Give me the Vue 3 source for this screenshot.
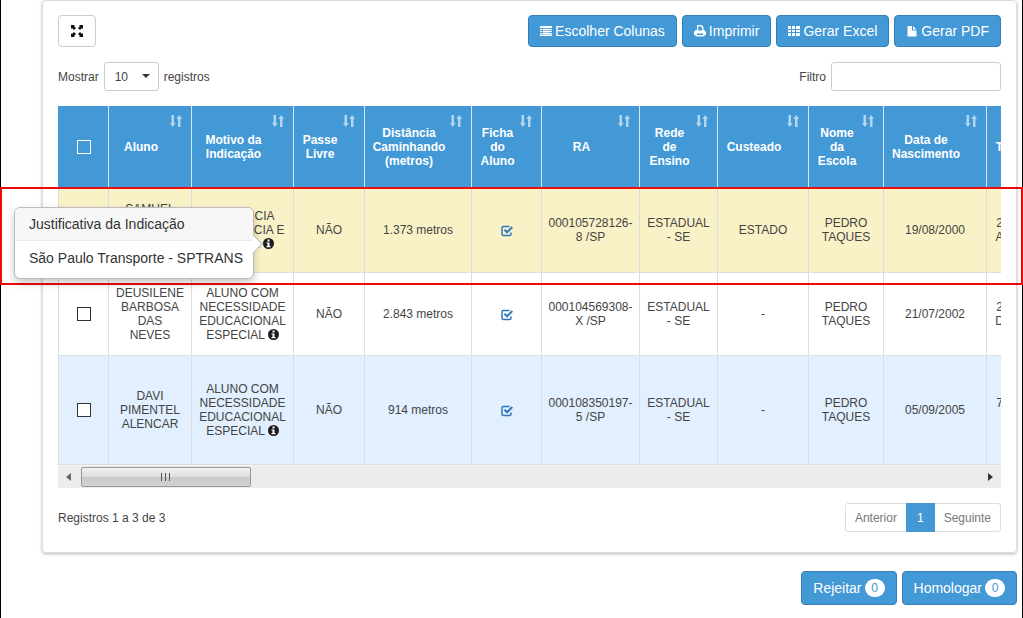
<script setup>
import { ref } from 'vue'

const pageSize = ref('10')
const filter = ref('')

const columns = [
  { label: 'Aluno', width: 83 },
  { label: 'Motivo da\nIndicação', width: 102 },
  { label: 'Passe\nLivre', width: 71 },
  { label: 'Distância\nCaminhando\n(metros)', width: 107 },
  { label: 'Ficha\ndo\nAluno', width: 70 },
  { label: 'RA', width: 98 },
  { label: 'Rede\nde\nEnsino', width: 78 },
  { label: 'Custeado', width: 91 },
  { label: 'Nome\nda\nEscola', width: 75 },
  { label: 'Data de\nNascimento', width: 103 },
  { label: 'T', width: 26, last: true }
]
const tableWidth = columns.reduce((sum, c) => sum + c.width, 50)

const special = 'ALUNO COM\nNECESSIDADE\nEDUCACIONAL\nESPECIAL'
const rows = [
  {
    kind: 'marked', name: 'SAMUEL\n\u00a0\n\u00a0\n\u00a0', reason: 'DISTÂNCIA\nRESIDÊNCIA E\nESCOLA', pass: 'NÃO',
    distance: '1.373 metros', ra: '000105728126-\n8 /SP', network: 'ESTADUAL\n- SE', paid: 'ESTADO',
    school: 'PEDRO\nTAQUES', birth: '19/08/2000', extra: '2\nA'
  },
  {
    kind: 'plain', name: 'DEUSILENE\nBARBOSA\nDAS\nNEVES', reason: special, pass: 'NÃO',
    distance: '2.843 metros', ra: '000104569308-\nX /SP', network: 'ESTADUAL\n- SE', paid: '-',
    school: 'PEDRO\nTAQUES', birth: '21/07/2002', extra: '2\nD'
  },
  {
    kind: 'tinted', name: 'DAVI\nPIMENTEL\nALENCAR', reason: special, pass: 'NÃO',
    distance: '914 metros', ra: '000108350197-\n5 /SP', network: 'ESTADUAL\n- SE', paid: '-',
    school: 'PEDRO\nTAQUES', birth: '05/09/2005', extra: '7\n\u00a0'
  }
]
</script>

<template>
  <div class="page">
    <main class="card">
      <div class="toolbar">
        <button class="expand" type="button" aria-label="Expandir">
          <svg width="12" height="12" viewBox="0 0 12 12" fill="#111">
            <path d="M0 0h4L3 1l2 2-2 2-2-2-1 1zM12 0v4l-1-1-2 2-2-2 2-2-1-1zM0 12V8l1 1 2-2 2 2-2 2 1 1zM12 12H8l1-1-2-2 2-2 2 2 1-1z" />
          </svg>
        </button>
        <div class="actions">
          <button class="btn" type="button">
            <svg width="12" height="12" viewBox="0 0 12 12" fill="#fff">
              <path d="M0 1h12v2H0zM0 4h2v1H0zM3 4h9v1H3zM0 6h2v1H0zM3 6h9v1H3zM0 8h2v1H0zM3 8h9v1H3zM0 9.500h12v1.500H0z" />
              <path d="M2.500 3.500h7v6h-7z" fill-opacity="0.45" />
            </svg>
            <span>Escolher Colunas</span>
          </button>
          <button class="btn" type="button">
            <svg width="12" height="12" viewBox="0 0 12 12" fill="#fff">
              <path fill-rule="evenodd" d="M3 0h4.500l2 2v3h1L12 7v3h-1.500v1.500h-9V10H0V7l1.500-2H3zM4.200 1.200V5.500h4V2.500H7V1.200zM3 8.500v1.500h6V8.500z" />
            </svg>
            <span>Imprimir</span>
          </button>
          <button class="btn" type="button">
            <svg width="12" height="12" viewBox="0 0 12 12" fill="#fff">
              <path d="M0 1h3v3H0zM4 1h3v3H4zM8 1h4v3H8zM0 5h3v2H0zM4 5h3v2H4zM8 5h4v2H8zM0 8h3v3H0zM4 8h3v3H4zM8 8h4v3H8z" />
            </svg>
            <span>Gerar Excel</span>
          </button>
          <button class="btn" type="button">
            <svg width="12" height="12" viewBox="0 0 12 12" fill="#fff">
              <path d="M1.500 1h4.500v4.500h4.500V11.500h-9zM7 1l3.500 3.500H7z" />
            </svg>
            <span>Gerar PDF</span>
          </button>
        </div>
      </div>

      <div class="filters">
        <label class="length">
          Mostrar
          <span class="select-box">
            <select v-model="pageSize"><option>10</option></select>
            <svg class="caret" width="8" height="4" viewBox="0 0 8 4" fill="#333"><path d="M0 0h8L4 4z" /></svg>
          </span>
          registros
        </label>
        <label class="search">Filtro <input v-model="filter" type="text" /></label>
      </div>

      <div class="scroller">
        <table :style="{ width: tableWidth + 'px' }">
          <colgroup>
            <col class="check-col" />
            <col v-for="c in columns" :key="c.label" :style="{ width: c.width + 'px' }" />
          </colgroup>
          <thead>
            <tr>
              <th><input type="checkbox" aria-label="Selecionar todos" /></th>
              <th v-for="c in columns" :key="c.label" :class="{ sortable: !c.last }">
                {{ c.label }}
                <svg v-if="!c.last" class="sort" width="12" height="12" viewBox="0 0 12 12" fill="#fff">
                  <path d="M1.500 0H4v8h1.700L2.800 12 0 8h1.500zM8 12h2.500V4H12L9.200 0 6.300 4H8z" />
                </svg>
              </th>
            </tr>
          </thead>
          <tbody>
            <tr v-for="r in rows" :key="r.ra" :class="r.kind">
              <td><input type="checkbox" aria-label="Selecionar aluno" /></td>
              <td>{{ r.name }}</td>
              <td>{{ r.reason }} <button class="info" type="button" aria-label="Justificativa"><svg width="11" height="11" viewBox="0 0 11 11">
                <circle cx="5.500" cy="5.500" r="5.500" fill="#1c1c1c" />
                <path d="M4.500 1.500h2v2h-2zM3.500 4.500h3v3.500h1v1.200h-4V8h1V5.600h-1z" fill="#fff" />
              </svg></button></td>
              <td>{{ r.pass }}</td>
              <td>{{ r.distance }}</td>
              <td>
                <a class="sheet" href="#" aria-label="Ficha do aluno">
                  <svg width="12" height="12" viewBox="0 0 12 12" fill="none" stroke="#3178b9">
                    <path d="M8.500 1.500H2.500a1.500 1.500 0 0 0-1.500 1.500v6a1.500 1.500 0 0 0 1.500 1.500h6a1.500 1.500 0 0 0 1.500-1.500V7.500" stroke-width="1.500" />
                    <path d="M3.500 4.800l2.500 2.500L11.300 2" stroke-width="2" />
                  </svg>
                </a>
              </td>
              <td>{{ r.ra }}</td>
              <td>{{ r.network }}</td>
              <td>{{ r.paid }}</td>
              <td>{{ r.school }}</td>
              <td>{{ r.birth }}</td>
              <td>{{ r.extra }}</td>
            </tr>
          </tbody>
        </table>
      </div>
      <div class="scrollbar">
        <svg width="5" height="8" viewBox="0 0 5 8" fill="#666"><path d="M5 0v8L0 4z" /></svg>
        <div class="track"><div class="thumb"><i></i><i></i><i></i></div></div>
        <svg width="5" height="8" viewBox="0 0 5 8" fill="#333"><path d="M0 0v8l5-4z" /></svg>
      </div>

      <div class="summary">
        <span>Registros 1 a 3 de 3</span>
        <nav class="pager">
          <a href="#">Anterior</a>
          <a href="#" class="current">1</a>
          <a href="#">Seguinte</a>
        </nav>
      </div>
    </main>

    <div class="footer">
      <button class="btn tall" type="button">Rejeitar <span class="badge">0</span></button>
      <button class="btn tall" type="button">Homologar <span class="badge">0</span></button>
    </div>

    <div class="highlight"></div>
    <div class="popover" role="tooltip">
      <h3>Justificativa da Indicação</h3>
      <p>São Paulo Transporte - SPTRANS</p>
    </div>
  </div>
</template>

<style>
body {
  margin: 0;
  background: #fff;
}
</style>

<style scoped>
* {
  box-sizing: border-box;
}
.page {
  position: relative;
  min-height: 100vh;
  padding: 0 5px 13px 41px;
  border: solid #000;
  border-width: 0 1px;
  font: 12px/14px "Liberation Sans", Arial, sans-serif;
  color: #444;
}
button, input, select {
  font: inherit;
  color: inherit;
}
.card {
  padding: 14px 15px 20px;
  border: 1px solid #ddd;
  border-radius: 4px;
  box-shadow: 0 1px 3px rgba(0, 0, 0, 0.3);
}
.toolbar, .filters, .summary {
  display: flex;
  justify-content: space-between;
  align-items: center;
}
.expand {
  display: flex;
  align-items: center;
  justify-content: center;
  width: 38px;
  height: 32px;
  padding: 0;
  background: #fff;
  border: 1px solid #ccc;
  border-radius: 4px;
}
.actions {
  display: flex;
  gap: 5px;
}
.btn {
  display: flex;
  align-items: center;
  gap: 3px;
  height: 32px;
  padding: 0 11px;
  background: #4398d6;
  border: 1px solid #357fb8;
  border-radius: 4px;
  color: #fff;
  font-size: 14px;
  white-space: nowrap;
}
.filters {
  margin: 15px 0;
}
.length, .search {
  display: flex;
  align-items: center;
  gap: 5px;
}
.select-box {
  position: relative;
  display: flex;
}
select {
  appearance: none;
  width: 55px;
  height: 29px;
  padding: 0 10px;
  background: #fff;
  border: 1px solid #ccc;
  border-radius: 3px;
}
.caret {
  position: absolute;
  top: 12px;
  right: 9px;
  pointer-events: none;
}
.search input {
  width: 170px;
  height: 29px;
  padding: 0 8px;
  background: #fff;
  border: 1px solid #ccc;
  border-radius: 3px;
}
.scroller {
  overflow: hidden;
}
table {
  table-layout: fixed;
  border-collapse: separate;
  border-spacing: 0;
}
.check-col {
  width: 50px;
}
th, td {
  padding: 0;
  text-align: center;
  vertical-align: middle;
  white-space: pre-line;
}
th {
  position: relative;
  height: 82px;
  background: #4398d6;
  border-left: 1px solid #d5e8f6;
  color: #fff;
}
th:first-child {
  border-left-color: #4398d6;
}
.sortable {
  padding-right: 18px;
}
.sort {
  position: absolute;
  top: 9px;
  right: 9px;
  opacity: 0.6;
}
td {
  border: solid #ddd;
  border-width: 0 0 1px 1px;
}
.marked td {
  height: 85px;
  background: #faf2c7;
}
.plain td {
  height: 83px;
}
.tinted td {
  height: 109px;
  background: #e1effe;
}
input[type="checkbox"] {
  appearance: none;
  display: block;
  width: 14px;
  height: 14px;
  margin: 0 auto;
  background: #fff;
  border: 1px solid #333;
}
th input[type="checkbox"] {
  background: transparent;
  border-color: #fff;
}
.info {
  padding: 0;
  border: 0;
  background: none;
  line-height: 11px;
  vertical-align: -1px;
}
.info svg, .sheet svg {
  display: block;
}
.sheet {
  display: inline-block;
  vertical-align: middle;
}
.scrollbar {
  display: flex;
  align-items: center;
  gap: 10px;
  height: 23px;
  padding: 0 8px;
  background: #ececec;
  border-top: 1px solid #f4f4f4;
}
.track {
  flex: 1;
}
.thumb {
  display: flex;
  align-items: center;
  justify-content: center;
  gap: 2px;
  width: 19%;
  height: 20px;
  background: linear-gradient(#f2f2f2, #dedede 50%, #cacaca 51%, #d2d2d2);
  border: 1px solid #979797;
  border-radius: 2px;
}
.thumb i {
  width: 2px;
  height: 8px;
  border-left: 1px solid #555;
}
.summary {
  margin-top: 15px;
}
.pager {
  display: flex;
  border: 1px solid #ddd;
  border-radius: 3px;
}
.pager a {
  padding: 7px 9px 6px;
  color: #777;
  text-decoration: none;
}
.pager .current {
  margin: -1px 0;
  padding: 8px 11px 7px;
  background: #4398d6;
  color: #fff;
}
.footer {
  display: flex;
  justify-content: flex-end;
  gap: 5px;
  margin-top: 18px;
}
.tall {
  height: 34px;
}
.badge {
  min-width: 20px;
  padding: 2px 6px;
  border-radius: 10px;
  background: #fff;
  color: #4398d6;
  font-size: 12px;
}
.highlight {
  position: absolute;
  top: 187px;
  left: -1px;
  right: -1px;
  height: 98px;
  border: 2px solid #ea0c0c;
  pointer-events: none;
}
.popover {
  position: absolute;
  top: 207px;
  left: 13px;
  width: 240px;
  border: 1px solid #bbb;
  border-radius: 6px;
  background: #fff;
  box-shadow: 0 4px 8px rgba(0, 0, 0, 0.22);
  color: #333;
  font-size: 14px;
  line-height: 16px;
  white-space: nowrap;
}
.popover::after {
  content: "";
  position: absolute;
  top: 29px;
  right: -7px;
  width: 13px;
  height: 13px;
  background: #fff;
  border: solid #bbb;
  border-width: 1px 1px 0 0;
  transform: rotate(45deg);
}
.popover h3 {
  position: relative;
  z-index: 1;
  margin: 0;
  padding: 8px 14px;
  background: #f7f7f7;
  border-bottom: 1px solid #ebebeb;
  border-radius: 5px 5px 0 0;
  font-size: 14px;
  font-weight: normal;
}
.popover p {
  margin: 0;
  padding: 9px 10px 12px 14px;
}
</style>
